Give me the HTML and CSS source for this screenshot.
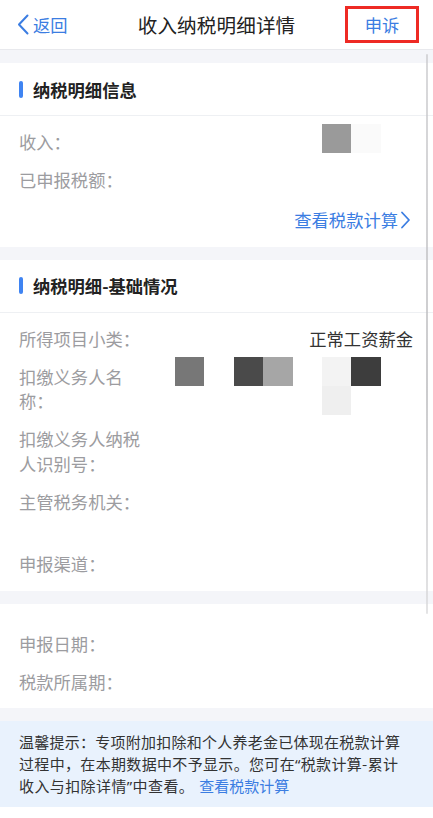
FILE: index.html
```html
<!DOCTYPE html>
<html lang="zh-CN">
<head>
<meta charset="utf-8">
<title>收入纳税明细详情</title>
<link rel="stylesheet" href="styles.css">
</head>
<body>
<header class="nav">
  <div class="back">
    <svg class="back-icon" width="12" height="21" viewBox="0 0 12 21"><path d="M10.5 1.5 L2 10.5 L10.5 19.5" fill="none" stroke="#3b7de2" stroke-width="2" stroke-linecap="round" stroke-linejoin="round"/></svg>
    <span>返回</span>
  </div>
  <div class="title">收入纳税明细详情</div>
  <div class="appeal"><span>申诉</span></div>
</header>
<main class="main">
  <section class="card">
    <div class="card-head">纳税明细信息</div>
    <div class="card-body">
      <div class="row"><div class="label">收入：</div><div class="value">
        <div class="mosaic m1"><i class="c6 g9a"></i><i class="c7 gfa"></i></div>
      </div></div>
      <div class="row"><div class="label">已申报税额：</div><div class="value"></div></div>
      <div class="link-row"><span>查看税款计算</span><svg width="11" height="18" viewBox="0 0 11 18"><path d="M2 1.5 L9 9 L2 16.5" fill="none" stroke="#3b7de2" stroke-width="1.8" stroke-linecap="round" stroke-linejoin="round"/></svg></div>
    </div>
  </section>
  <section class="card">
    <div class="card-head">纳税明细-基础情况</div>
    <div class="card-body">
      <div class="row"><div class="label">所得项目小类：</div><div class="value text">正常工资薪金</div></div>
      <div class="row"><div class="label">扣缴义务人名称：</div><div class="value">
        <div class="mosaic m2"><i class="c1 g77"></i><i class="c3 g4a"></i><i class="c4 ga5"></i><i class="c6 gf3"></i><i class="c7 g3d"></i><i class="c6 r2 gef"></i></div>
      </div></div>
      <div class="row"><div class="label">扣缴义务人纳税人识别号：</div><div class="value"></div></div>
      <div class="row"><div class="label">主管税务机关：</div><div class="value tall"></div></div>
      <div class="row"><div class="label">申报渠道：</div><div class="value"></div></div>
    </div>
  </section>
  <section class="card">
    <div class="card-body plain">
      <div class="row"><div class="label">申报日期：</div><div class="value"></div></div>
      <div class="row"><div class="label">税款所属期：</div><div class="value"></div></div>
    </div>
  </section>
  <div class="notice">
    <span class="nl nl1">温馨提示：专项附加扣除和个人养老金已体现在税款计算</span>
    <span class="nl nl2">过程中，在本期数据中不予显示。您可在<span class="q">“</span>税款计算-累计</span>
    <span class="nl nl3">收入与扣除详情<span class="q">”</span>中查看。<span class="notice-link">查看税款计算</span></span>
  </div>
</main>
<div class="scrollbar"></div>
</body>
</html>
```
FILE: styles.css
```css
* { box-sizing: border-box; }
html, body { margin: 0; padding: 0; background: #fff; }
body {
  font-family: "Noto Sans CJK SC", "Noto Sans", sans-serif;
  color: #333;
  position: relative;
  width: 433px;
}
.nav {
  height: 50px;
  background: #fff;
  border-bottom: 1px solid #e8e9ed;
  display: grid;
  grid-template-columns: 1fr auto 1fr;
  align-items: center;
}
.back {
  display: flex;
  align-items: center;
  padding-left: 17px;
  color: #3b7de2;
  font-size: 17.3px;
  gap: 4px;
}
.back-icon { display: block; }
.title {
  font-size: 19.6px;
  color: #222;
  letter-spacing: 0.1px;
}
.appeal {
  justify-self: end;
  margin-right: 14px;
  width: 74px;
  height: 37px;
  margin-top: -1px;
  border: 3px solid #ee2a24;
  display: flex;
  align-items: center;
  justify-content: center;
  color: #3b7de2;
  font-size: 17.3px;
}
.main {
  background: #f4f5f9;
  padding-top: 13px;
}
.card {
  background: #fff;
  margin-bottom: 13px;
}
.card-head {
  height: 53px;
  border-bottom: 1px solid #eef0f3;
  display: flex;
  align-items: center;
  padding-left: 19px;
  font-size: 17.3px;
  font-weight: 700;
  color: #222;
}
.card-head::before {
  content: "";
  width: 4px;
  height: 17px;
  border-radius: 2px;
  background: #3f84f2;
  margin-right: 10px;
}
.card-body {
  padding: 14px 20px 14px 19px;
  display: flex;
  flex-direction: column;
  gap: 13.5px;
}
.card-body.plain { padding-top: 28px; }
.row {
  display: flex;
  font-size: 17.3px;
  line-height: 24.5px;
}
.label {
  width: 124px;
  flex-shrink: 0;
  color: #9c9ca0;
}
.value {
  flex: 1;
  position: relative;
  min-height: 24.5px;
}
.value.tall { min-height: 49px; }
.value.text {
  text-align: right;
  color: #333;
}
.mosaic {
  position: absolute;
  left: 32px;
  display: grid;
  grid-template-columns: repeat(7, 29.4px);
  grid-auto-rows: 29.4px;
}
.m1 { top: -6px; }
.m2 { top: -8px; }
.mosaic i { display: block; grid-row: 1; }
.mosaic i.r2 { grid-row: 2; }
.c1 { grid-column: 1; }
.c3 { grid-column: 3; }
.c4 { grid-column: 4; }
.c6 { grid-column: 6; }
.c7 { grid-column: 7; }
.g9a { background: #9a9a9a; }
.gfa { background: #fafafa; }
.g77 { background: #777; }
.g4a { background: #4a4a4a; }
.ga5 { background: #a6a6a6; }
.gf3 { background: #f3f3f3; }
.g3d { background: #3d3d3d; }
.gef { background: #efefef; }
.link-row {
  margin-top: 2px;
  display: flex;
  justify-content: flex-end;
  align-items: center;
  gap: 2px;
  padding-right: 2px;
  color: #3b7de2;
  font-size: 17.3px;
  line-height: 24.5px;
}
.link-row svg { display: block; }
.notice {
  background: #e9f2fd;
  padding: 10px 10px 10px 19px;
  font-size: 15px;
  line-height: 22px;
  color: #333;
}
.nl {
  display: block;
}
.nl1, .nl2 {
  text-align: justify;
  text-align-last: justify;
}
.nl1 { width: 381px; }
.nl2 { width: 379px; }
.nl3 {
  white-space: nowrap;
  letter-spacing: 0.4px;
}
.q { font-family: "Noto Sans", sans-serif; }
.notice-link {
  color: #3b7de2;
  margin-left: 5px;
  letter-spacing: 0;
}
.scrollbar {
  position: absolute;
  right: 5px;
  top: 54px;
  width: 2px;
  height: 560px;
  border-radius: 1px;
  background: linear-gradient(#c9c9cc, #b5b5b8 60%, #d8d8da);
  opacity: 0.7;
}
```
